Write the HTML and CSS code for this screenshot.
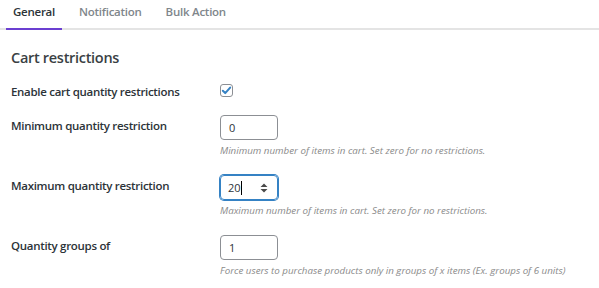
FILE: index.html
```html
<!DOCTYPE html>
<html>
<head>
<meta charset="utf-8">
<link rel="stylesheet" href="styles.css">
</head>
<body>
<nav class="tabs">
  <a class="tab active">General</a>
  <a class="tab">Notification</a>
  <a class="tab">Bulk Action</a>
</nav>
<main class="panel">
  <h2 class="title">Cart restrictions</h2>
  <div class="row row-check">
    <div class="label">Enable cart quantity restrictions</div>
    <div class="field">
      <span class="checkbox"><svg viewBox="0 0 12 12" width="11" height="11"><path d="M2 6.3 L4.6 8.8 L10 2.8" fill="none" stroke="#3582c4" stroke-width="2.2" stroke-linecap="round" stroke-linejoin="round"/></svg></span>
    </div>
  </div>
  <div class="row">
    <div class="label">Minimum quantity restriction</div>
    <div class="field">
      <div class="input">0</div>
      <p class="desc">Minimum number of items in cart. Set zero for no restrictions.</p>
    </div>
  </div>
  <div class="row">
    <div class="label">Maximum quantity restriction</div>
    <div class="field">
      <div class="input focused"><span>20</span><span class="caret"></span><span class="spacer"></span><svg class="spin" viewBox="0 0 8 10" width="8" height="10"><path d="M4 0.5 L7.5 4 L0.5 4 Z M4 9.5 L7.5 6 L0.5 6 Z" fill="#4a4a4a"/></svg></div>
      <p class="desc">Maximum number of items in cart. Set zero for no restrictions.</p>
    </div>
  </div>
  <div class="row">
    <div class="label">Quantity groups of</div>
    <div class="field">
      <div class="input">1</div>
      <p class="desc">Force users to purchase products only in groups of x items (Ex. groups of 6 units)</p>
    </div>
  </div>
</main>
</body>
</html>
```
FILE: styles.css
```css
* { box-sizing: border-box; }
html, body { margin: 0; padding: 0; background: #fff; }
body {
  font-family: "Open Sans", "Noto Sans", sans-serif;
  color: #2c3338;
  width: 599px;
  height: 288px;
  overflow: hidden;
}
.tabs {
  display: flex;
  gap: 10px;
  padding-left: 6px;
  border-bottom: 2px solid #e4e4e4;
  height: 30px;
}
.tab {
  font-size: 11.5px;
  font-weight: 600;
  letter-spacing: -0.25px;
  color: #80868b;
  padding: 4px 7px 0;
  height: 30px;
  border-bottom: 2px solid transparent;
  margin-bottom: -2px;
}
.tab.active {
  color: #2c3338;
  border-bottom-color: #6b3fd1;
}
.panel { padding: 0 0 0 11px; }
.title {
  margin: 17px 0 0;
  font-size: 14.5px;
  font-weight: 600;
  letter-spacing: -0.3px;
  line-height: 21px;
  color: #3a3f44;
}
.row {
  display: grid;
  grid-template-columns: 209px 1fr;
  align-items: start;
}
.row-check { margin-top: 15px; margin-bottom: 16px; }
.label {
  font-size: 11.5px;
  font-weight: 600;
  letter-spacing: -0.3px;
  line-height: 16px;
  color: #2c3338;
}
.row .label { padding-top: 3px; }
.row-check .label { padding-top: 1px; }
.checkbox {
  display: flex;
  align-items: center;
  justify-content: center;
  width: 13px;
  height: 13px;
  border: 1px solid #8c8f94;
  border-radius: 3px;
  margin-top: 1px;
}
.row-check { margin-bottom: 15px; }
.input {
  display: flex;
  align-items: center;
  width: 58px;
  height: 25px;
  border: 1px solid #8c8f94;
  border-radius: 4px;
  padding: 0 8px;
  font-size: 11px;
  color: #2c3338;
}
.input.focused {
  border-color: #3582c4;
  box-shadow: 0 0 0 1px #3582c4;
  padding-left: 7px;
}
.caret {
  width: 1px;
  height: 14px;
  background: #000;
}
.spacer { flex: 1; }
.spin { margin-right: 1px; }
.desc {
  margin: 5px 0 18px;
  font-size: 9.75px;
  font-style: italic;
  line-height: 12px;
  color: #8a8a8a;
}
```
